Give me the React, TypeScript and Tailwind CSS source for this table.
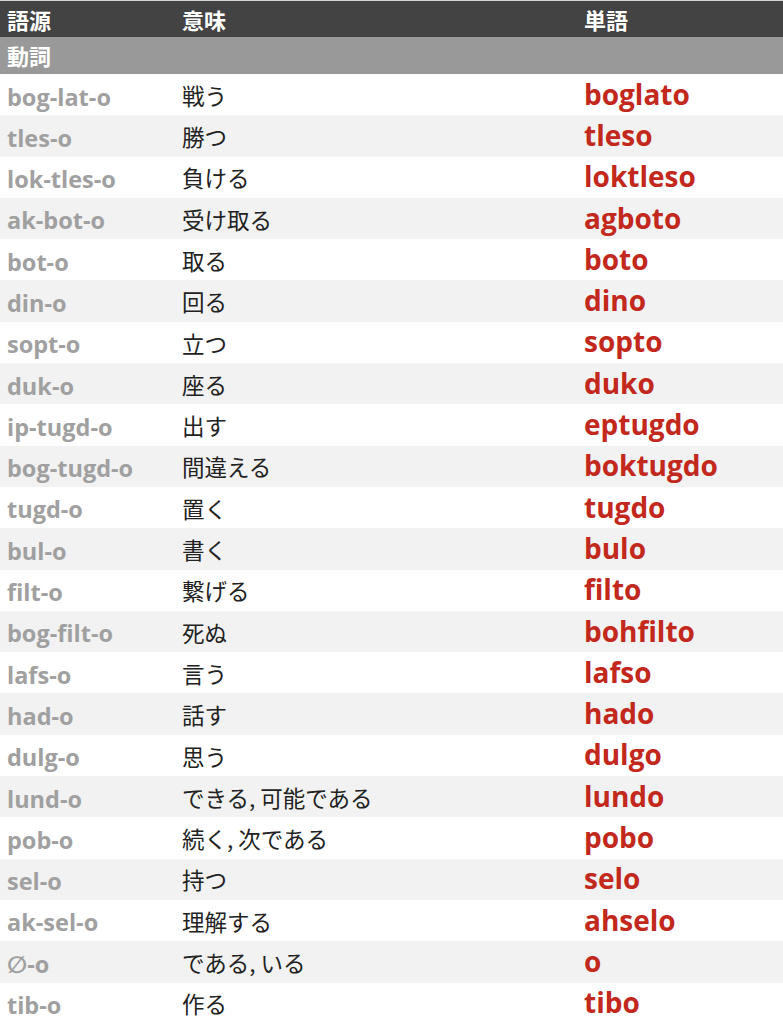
import React from 'react';

type Row = { root: string; meaning: string; word: string };

const rows: Row[] = [
  { root: 'bog-lat-o', meaning: '戦う', word: 'boglato' },
  { root: 'tles-o', meaning: '勝つ', word: 'tleso' },
  { root: 'lok-tles-o', meaning: '負ける', word: 'loktleso' },
  { root: 'ak-bot-o', meaning: '受け取る', word: 'agboto' },
  { root: 'bot-o', meaning: '取る', word: 'boto' },
  { root: 'din-o', meaning: '回る', word: 'dino' },
  { root: 'sopt-o', meaning: '立つ', word: 'sopto' },
  { root: 'duk-o', meaning: '座る', word: 'duko' },
  { root: 'ip-tugd-o', meaning: '出す', word: 'eptugdo' },
  { root: 'bog-tugd-o', meaning: '間違える', word: 'boktugdo' },
  { root: 'tugd-o', meaning: '置く', word: 'tugdo' },
  { root: 'bul-o', meaning: '書く', word: 'bulo' },
  { root: 'filt-o', meaning: '繋げる', word: 'filto' },
  { root: 'bog-filt-o', meaning: '死ぬ', word: 'bohfilto' },
  { root: 'lafs-o', meaning: '言う', word: 'lafso' },
  { root: 'had-o', meaning: '話す', word: 'hado' },
  { root: 'dulg-o', meaning: '思う', word: 'dulgo' },
  { root: 'lund-o', meaning: 'できる, 可能である', word: 'lundo' },
  { root: 'pob-o', meaning: '続く, 次である', word: 'pobo' },
  { root: 'sel-o', meaning: '持つ', word: 'selo' },
  { root: 'ak-sel-o', meaning: '理解する', word: 'ahselo' },
  { root: '∅-o', meaning: 'である, いる', word: 'o' },
  { root: 'tib-o', meaning: '作る', word: 'tibo' },
];

const latin = "font-['Open_Sans','DejaVu_Sans','Noto_Sans_CJK_JP',sans-serif]";
const jp = "font-['Noto_Sans_CJK_JP','Noto_Sans',sans-serif]";

export default function App() {
  return (
    <div className="w-[783px] bg-white overflow-hidden">
      {/* header */}
      <div className={`grid grid-cols-[175px_402px_1fr] h-[37px] items-center bg-[#434343] border-t border-[#d6d6d6] text-white font-bold text-[22px] ${jp}`}>
        <div className="pl-[7px]">語源</div>
        <div className="pl-[7px]">意味</div>
        <div className="pl-[7px]">単語</div>
      </div>

      {/* section */}
      <div className={`h-[37px] flex items-center pl-[7px] bg-[#999999] text-white font-bold text-[22px] ${jp}`}>
        動詞
      </div>

      {rows.map((r, i) => (
        <div
          key={r.root}
          className={`grid grid-cols-[175px_402px_1fr] h-[41.3px] items-center ${i % 2 === 1 ? 'bg-[#f2f2f2]' : 'bg-white'}`}
        >
          <div className={`pl-[7px] pt-[5px] text-[23.5px] font-bold text-[#a0a0a0] ${latin}`}>{r.root}</div>
          <div className={`pl-[7px] pt-[2px] text-[22.5px] text-[#222] ${jp}`}>{r.meaning}</div>
          <div className={`pl-[7px] pb-[2px] text-[28px] leading-none font-bold text-[#c2281c] ${latin}`}>{r.word}</div>
        </div>
      ))}
    </div>
  );
}
